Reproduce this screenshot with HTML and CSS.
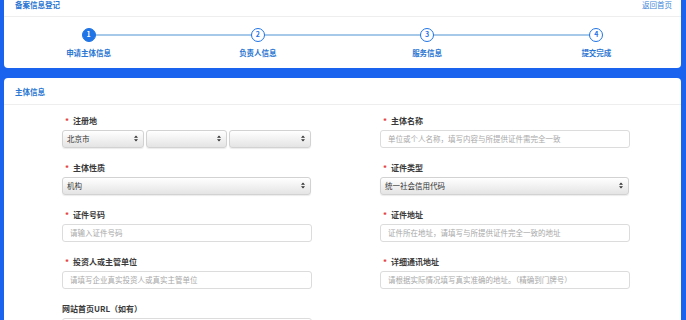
FILE: index.html
```html
<!DOCTYPE html>
<html lang="zh-CN">
<head>
<meta charset="utf-8">
<title>备案信息登记</title>
<link rel="stylesheet" href="styles.css">
</head>
<body>
<div class="page">
  <div class="top-card">
    <div class="top-head">
      <span class="title">备案信息登记</span>
      <a class="back">返回首页</a>
    </div>
    <div class="steps">
      <div class="step done"><span class="dot">1</span><span class="step-label">申请主体信息</span></div>
      <div class="step"><span class="dot">2</span><span class="step-label">负责人信息</span></div>
      <div class="step"><span class="dot">3</span><span class="step-label">服务信息</span></div>
      <div class="step last"><span class="dot">4</span><span class="step-label">提交完成</span></div>
    </div>
  </div>

  <div class="main-card">
    <div class="card-head">主体信息</div>
    <div class="form">
      <div class="field">
        <div class="label"><span class="req">*</span>注册地</div>
        <div class="select-row">
          <div class="select"><span>北京市</span><svg class="arr" width="4" height="7" viewBox="0 0 4 7"><path d="M0 2.8L2 0.4L4 2.8Z M0 4.2L2 6.6L4 4.2Z" fill="#333"/></svg></div>
          <div class="select"><span></span><svg class="arr" width="4" height="7" viewBox="0 0 4 7"><path d="M0 2.8L2 0.4L4 2.8Z M0 4.2L2 6.6L4 4.2Z" fill="#333"/></svg></div>
          <div class="select"><span></span><svg class="arr" width="4" height="7" viewBox="0 0 4 7"><path d="M0 2.8L2 0.4L4 2.8Z M0 4.2L2 6.6L4 4.2Z" fill="#333"/></svg></div>
        </div>
      </div>
      <div class="field">
        <div class="label"><span class="req">*</span>主体名称</div>
        <input class="input" placeholder="单位或个人名称，填写内容与所提供证件需完全一致">
      </div>

      <div class="field">
        <div class="label"><span class="req">*</span>主体性质</div>
        <div class="select wide"><span>机构</span><svg class="arr" width="4" height="7" viewBox="0 0 4 7"><path d="M0 2.8L2 0.4L4 2.8Z M0 4.2L2 6.6L4 4.2Z" fill="#333"/></svg></div>
      </div>
      <div class="field">
        <div class="label"><span class="req">*</span>证件类型</div>
        <div class="select wide"><span>统一社会信用代码</span><svg class="arr" width="4" height="7" viewBox="0 0 4 7"><path d="M0 2.8L2 0.4L4 2.8Z M0 4.2L2 6.6L4 4.2Z" fill="#333"/></svg></div>
      </div>

      <div class="field">
        <div class="label"><span class="req">*</span>证件号码</div>
        <input class="input" placeholder="请输入证件号码">
      </div>
      <div class="field">
        <div class="label"><span class="req">*</span>证件地址</div>
        <input class="input" placeholder="证件所在地址，请填写与所提供证件完全一致的地址">
      </div>

      <div class="field">
        <div class="label"><span class="req">*</span>投资人或主管单位</div>
        <input class="input" placeholder="请填写企业真实投资人或真实主管单位">
      </div>
      <div class="field">
        <div class="label"><span class="req">*</span>详细通讯地址</div>
        <input class="input" placeholder="请根据实际情况填写真实准确的地址。（精确到门牌号）">
      </div>

      <div class="field">
        <div class="label plain">网站首页URL（如有）</div>
        <input class="input">
      </div>
    </div>
  </div>
</div>
</body>
</html>
```

FILE: styles.css
```css
* { box-sizing: border-box; }

html, body {
  margin: 0;
  padding: 0;
  height: 100%;
  overflow: hidden;
}

body {
  background: #1a63ef;
  font-family: "Noto Sans CJK SC", "Noto Sans", sans-serif;
  color: #333;
}

.page {
  padding: 0 5px 0 4px;
}

.top-card {
  background: #fff;
  border-radius: 0 0 4px 4px;
  height: 68px;
}

.top-head {
  height: 17px;
  border-bottom: 1px solid #eeeeee;
  display: flex;
  justify-content: space-between;
  align-items: flex-start;
  padding: 0 9px 0 11px;
}

.title {
  font-size: 7.5px;
  line-height: 10px;
  font-weight: 700;
  color: #2a76d2;
}

.back {
  font-size: 7.5px;
  line-height: 10px;
  color: #3c86d8;
}

.steps {
  display: grid;
  grid-template-columns: repeat(4, 1fr);
  padding-top: 11px;
}

.step {
  position: relative;
  display: flex;
  flex-direction: column;
  align-items: center;
}

.step::after {
  content: "";
  position: absolute;
  left: 50%;
  width: 100%;
  top: 6px;
  height: 2px;
  background: #a6c9ea;
  z-index: 0;
}

.step.last::after { display: none; }

.dot {
  position: relative;
  z-index: 1;
  width: 14px;
  height: 14px;
  border-radius: 50%;
  border: 1.5px solid #1f74e6;
  background: #fff;
  color: #1f74e6;
  font-size: 7px;
  font-weight: 700;
  line-height: 11px;
  text-align: center;
}

.step.done .dot {
  background: #1f74e6;
  color: #fff;
}

.step-label {
  margin-top: 6px;
  font-size: 7.5px;
  line-height: 10px;
  font-weight: 700;
  color: #2a76d2;
}

.main-card {
  margin-top: 10px;
  background: #fff;
  border-radius: 4px 4px 0 0;
  min-height: 300px;
}

.card-head {
  height: 27px;
  border-bottom: 1px solid #eeeeee;
  padding: 9px 0 0 11px;
  font-size: 7.5px;
  line-height: 10px;
  font-weight: 700;
  color: #2a76d2;
}

.form {
  display: grid;
  grid-template-columns: 318px 318px;
  row-gap: 15.5px;
  padding: 11px 0 0 58px;
}

.field {
  display: flex;
  flex-direction: column;
  width: 250px;
}

.label {
  font-size: 8px;
  line-height: 10px;
  font-weight: 700;
  color: #3a3a3a;
  padding-left: 3px;
  margin-bottom: 3.5px;
  white-space: nowrap;
}

.label.plain { padding-left: 0; }

.req {
  color: #e23b3b;
  font-size: 8px;
  margin-right: 4px;
}

.select-row {
  display: flex;
  gap: 2px;
  width: 249px;
}

.select {
  flex: 1;
  height: 18px;
  border: 1px solid #d2d2d2;
  border-radius: 3px;
  background: linear-gradient(#ffffff, #e4e4e4);
  box-shadow: 0 1px 1px rgba(0, 0, 0, 0.08);
  display: flex;
  align-items: center;
  justify-content: space-between;
  padding: 0 5px 0 4px;
  font-size: 7.5px;
  color: #333;
}

.select.wide { width: 249px; flex: none; }

.arr { flex: none; }

.input {
  width: 250px;
  height: 18px;
  border: 1px solid #dcdcdc;
  border-radius: 3px;
  background: #fff;
  padding: 0 7px;
  font-family: "Noto Sans CJK SC", "Noto Sans", sans-serif;
  font-size: 7.5px;
  color: #333;
  outline: none;
}

.input::placeholder {
  color: #a8a8a8;
}
```
